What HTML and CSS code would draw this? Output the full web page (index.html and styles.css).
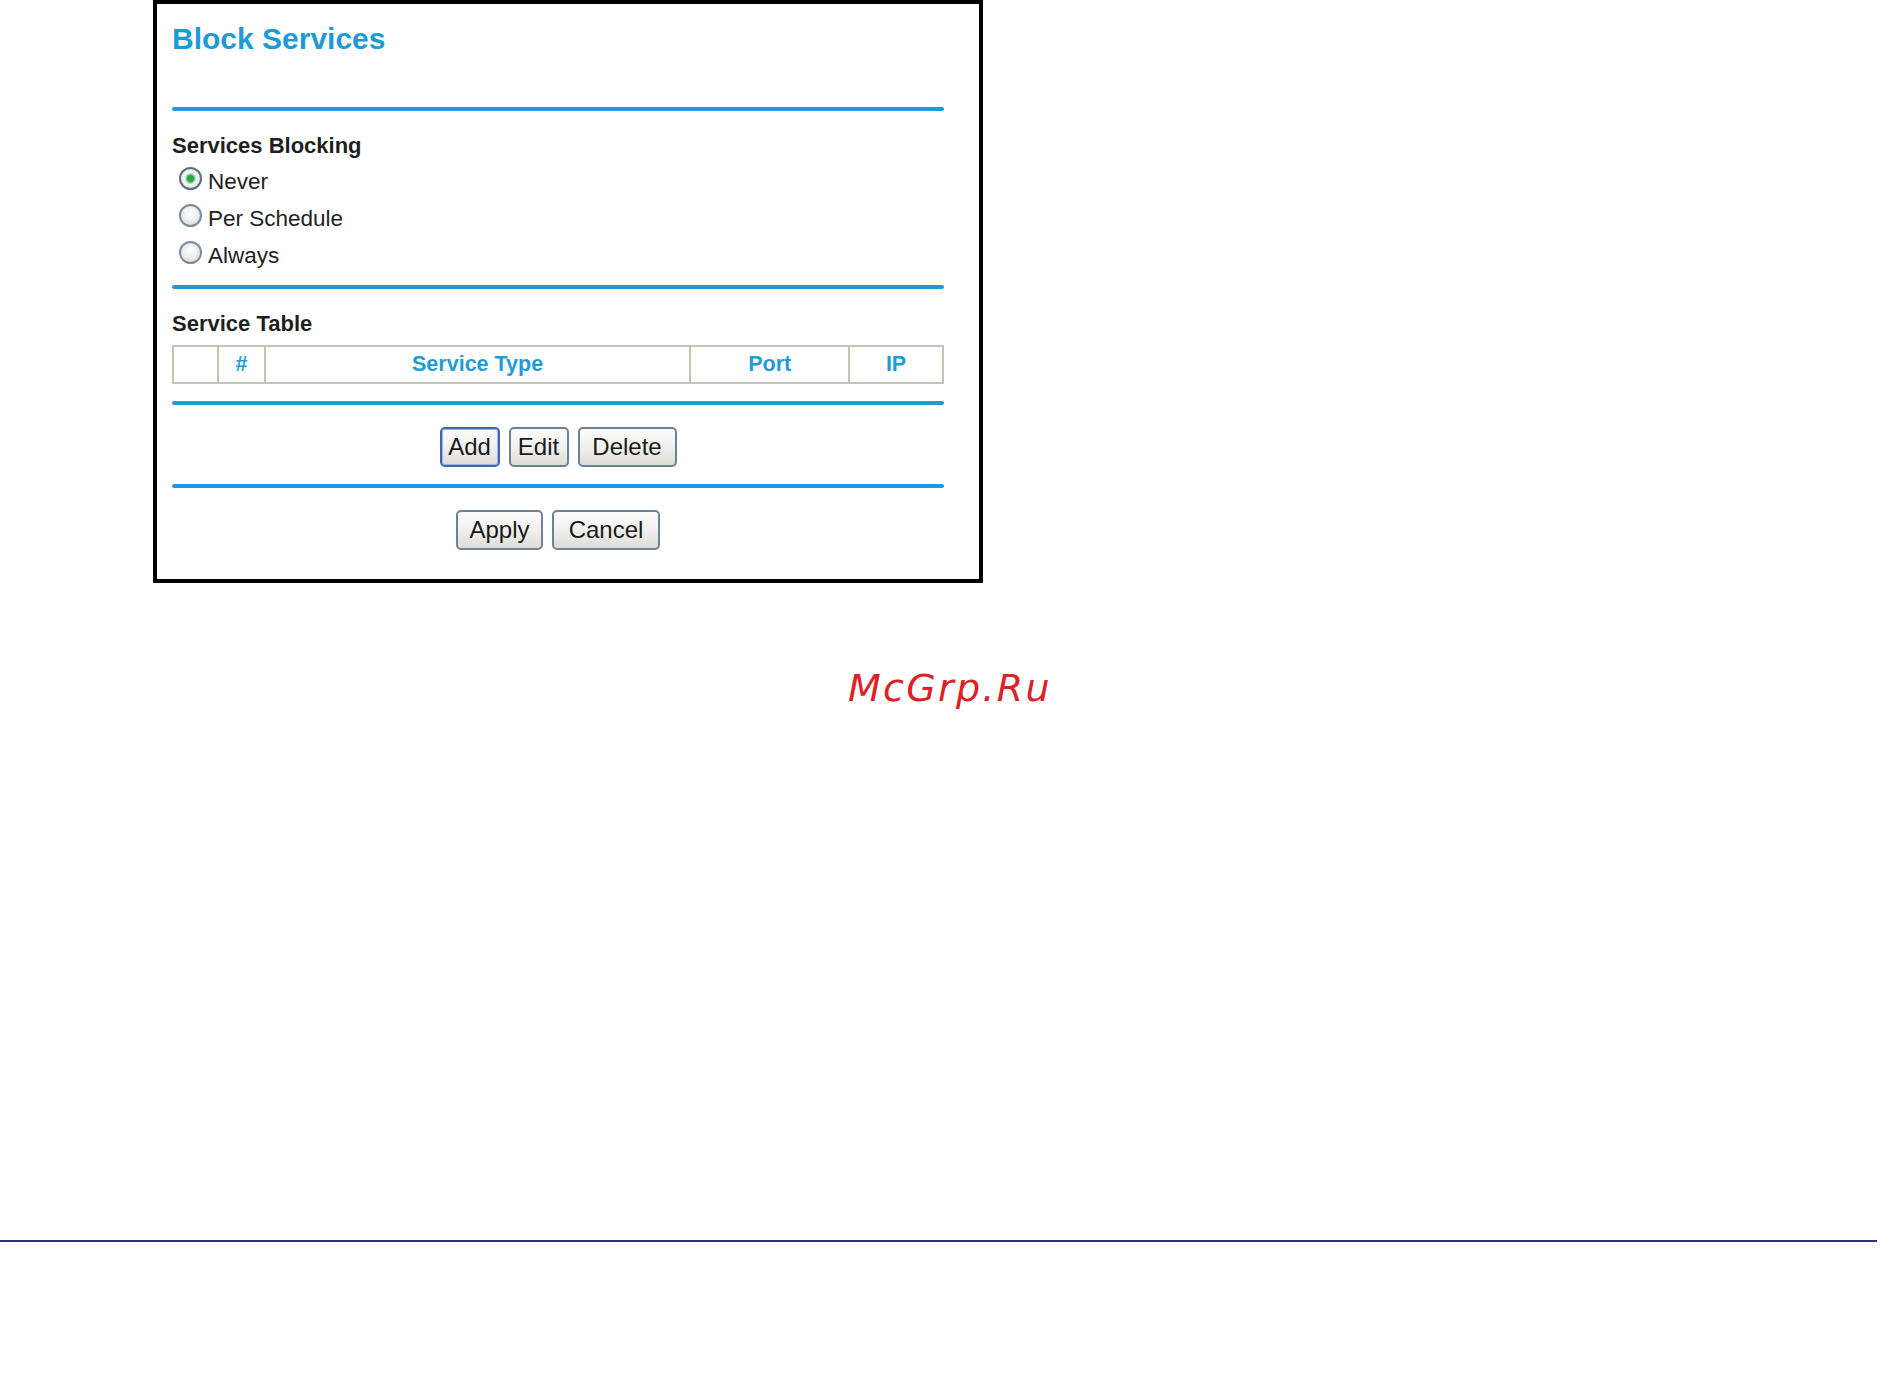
FILE: index.html
```html
<!DOCTYPE html>
<html lang="en">
  <head>
    <meta charset="UTF-8" />
    <meta name="viewport" content="width=device-width, initial-scale=1.0" />
    <title>Block Services</title>
    <link rel="stylesheet" href="styles.css">
  </head>
  <body>
    <div class="panel">
      <h1 class="title">Block Services</h1>
      <div class="rule rule-top"></div>

      <!-- services blocking -->
      <div class="section-label">Services Blocking</div>
      <label class="radio-row">
        <input type="radio" name="blocking" checked />
        <span>Never</span>
      </label>
      <label class="radio-row">
        <input type="radio" name="blocking" />
        <span>Per Schedule</span>
      </label>
      <label class="radio-row">
        <input type="radio" name="blocking" />
        <span>Always</span>
      </label>
      <div class="rule rule-mid"></div>

      <!-- service table -->
      <div class="section-label">Service Table</div>
      <table class="service-table">
        <tr>
          <th class="col-check"></th>
          <th class="col-num">#</th>
          <th class="col-type">Service Type</th>
          <th class="col-port">Port</th>
          <th class="col-ip">IP</th>
        </tr>
      </table>
      <div class="rule rule-table"></div>

      <div class="button-row">
        <button class="btn btn-default btn-add">Add</button>
        <button class="btn btn-edit">Edit</button>
        <button class="btn btn-delete">Delete</button>
      </div>
      <div class="rule rule-buttons"></div>

      <div class="button-row">
        <button class="btn btn-apply">Apply</button>
        <button class="btn btn-cancel">Cancel</button>
      </div>
    </div>

    <div class="watermark">McGrp.Ru</div>

    <div class="page-rule"></div>
  </body>
</html>
```

FILE: styles.css
```css
body {
  margin: 0;
  padding: 0;
  background-color: #ffffff;
  font-family: "Liberation Sans", Arial, sans-serif;
  color: #222;
}

.panel {
  box-sizing: border-box;
  width: 830px;
  height: 583px;
  margin-left: 153px;
  padding: 17px 35px 0 15px;
  border: 4px solid #000;
  background-color: #fff;
}

.title {
  margin: 0;
  font-size: 30px;
  line-height: 36px;
  font-weight: bold;
  color: #1e9ad6;
}

.rule {
  height: 4px;
  background-color: #1f9bd7;
  border-radius: 2px;
}

.rule-top {
  margin-top: 50px;
}

.rule-mid {
  margin-top: 11px;
}

.rule-table {
  margin-top: 17px;
}

.rule-buttons {
  margin-top: 17px;
}

.section-label {
  margin-top: 22px;
  font-size: 22px;
  line-height: 26px;
  font-weight: bold;
  color: #1f1f1f;
}

.radio-row {
  display: flex;
  align-items: flex-start;
  height: 37px;
  font-size: 22.5px;
  line-height: 37px;
  color: #222;
}

.radio-row:first-of-type {
  margin-top: 4px;
}

.radio-row input {
  appearance: none;
  -webkit-appearance: none;
  box-sizing: border-box;
  width: 23px;
  height: 23px;
  margin: 4px 6px 0 7px;
  border: 2px solid #7d8a97;
  border-radius: 50%;
  background: radial-gradient(circle at 50% 40%, #ffffff 0, #f1f1f1 40%, #d4d4d4 100%);
}

.radio-row input:checked {
  border-color: #5f6d7c;
  background: radial-gradient(circle, #22a83c 0, #22a83c 3px, #9ad8a4 4.5px, #f6f6f6 6px, #dadada 100%);
}

.service-table {
  width: 772px;
  margin-top: 8px;
  border-collapse: collapse;
  border: 2px solid #c2c0b1;
}

.service-table th {
  height: 35px;
  padding: 0;
  border: 2px solid #c6c4b6;
  font-size: 21.5px;
  font-weight: bold;
  color: #1f9bd8;
  text-align: center;
  vertical-align: middle;
}

.col-check { width: 43px; }
.col-num { width: 45px; }
.col-type { width: 424px; }
.col-port { width: 157px; }
.col-ip { width: 92px; }

.button-row {
  display: flex;
  justify-content: center;
  gap: 9px;
  margin-top: 22px;
}

.btn {
  box-sizing: border-box;
  height: 40px;
  padding: 0;
  border: 2px solid #6f8196;
  border-radius: 5px;
  background: linear-gradient(#fcfcfc, #f0f0ee 50%, #dedcd6);
  font-family: "Liberation Sans", Arial, sans-serif;
  font-size: 24px;
  color: #1a1a1a;
  cursor: pointer;
}

.btn-default {
  border-color: #3f66b3;
  box-shadow: inset 0 0 0 1px #9db7e4;
}

.btn-add { width: 60px; }
.btn-edit { width: 60px; }
.btn-delete { width: 99px; }
.btn-apply { width: 87px; }
.btn-cancel { width: 108px; }

.watermark {
  margin: 82px 0 0 848px;
  font-family: "DejaVu Sans", sans-serif;
  font-style: oblique;
  font-size: 38px;
  line-height: 46px;
  letter-spacing: 2.3px;
  color: #dc2127;
}

.page-rule {
  width: 1877px;
  height: 2px;
  margin-top: 529px;
  background-color: #2f3088;
}
```
